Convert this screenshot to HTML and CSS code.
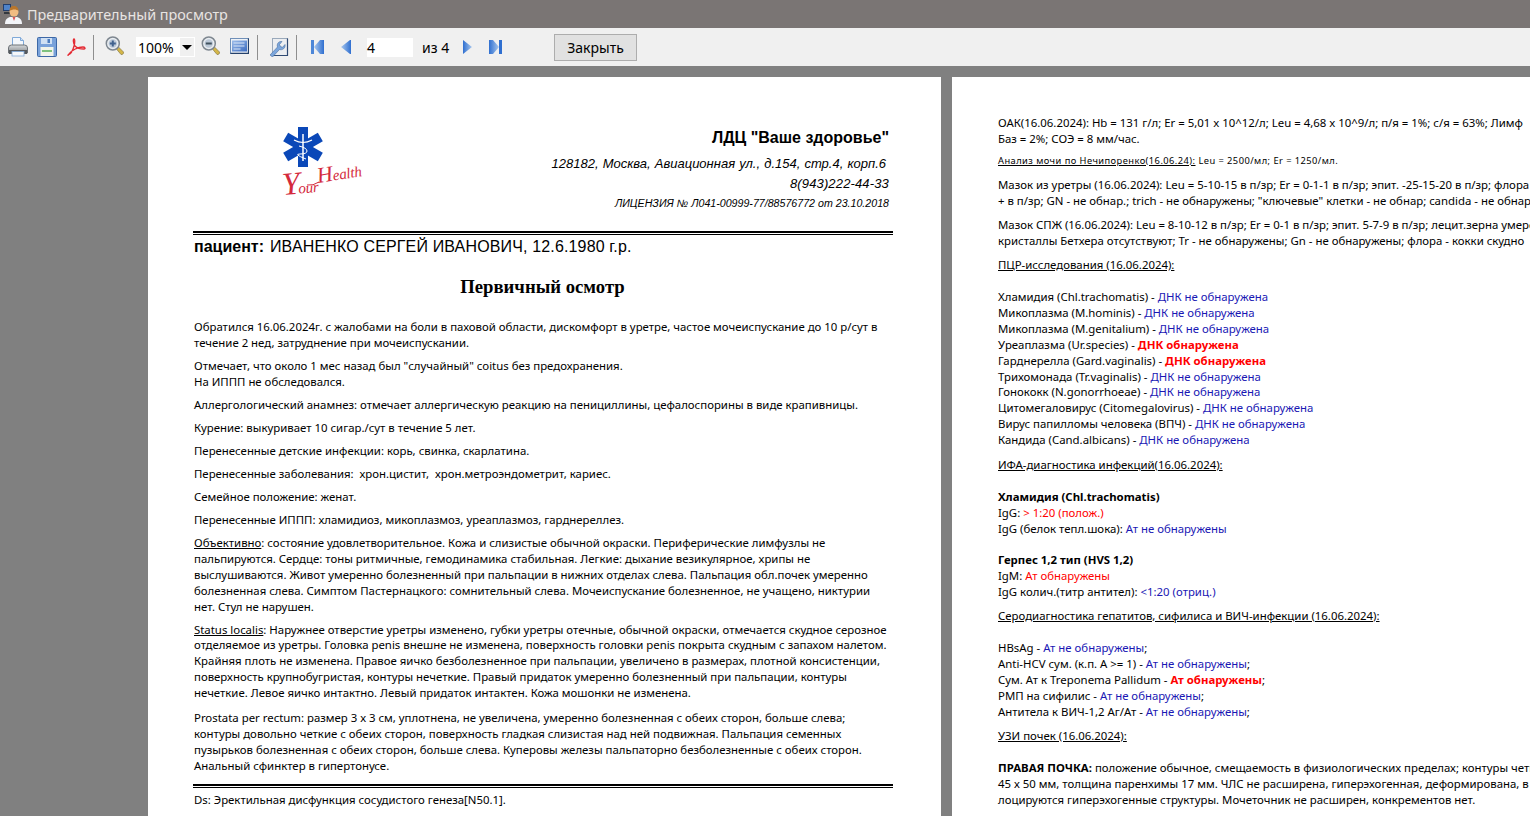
FILE: index.html
```html
<!DOCTYPE html>
<html lang="ru">
<head>
<meta charset="utf-8">
<title>Предварительный просмотр</title>
<link rel="stylesheet" href="styles.css">
</head>
<body>
<svg class="defs" width="0" height="0" aria-hidden="true">
  <defs>
    <linearGradient id="nav" x1="0" x2="1" y1="0" y2="0"><stop offset="0" stop-color="#a9c8ee"/><stop offset="1" stop-color="#2f6fd0"/></linearGradient>
    <linearGradient id="navr" x1="0" x2="1" y1="0" y2="0"><stop offset="0" stop-color="#2f6fd0"/><stop offset="1" stop-color="#a9c8ee"/></linearGradient>
    <linearGradient id="body" x1="0" x2="0" y1="0" y2="1"><stop offset="0" stop-color="#d5d8da"/><stop offset="1" stop-color="#85898c"/></linearGradient>
    <linearGradient id="panel" x1="0" x2="1" y1="0" y2="1"><stop offset="0" stop-color="#9dbdea"/><stop offset="1" stop-color="#3c6cc0"/></linearGradient>
    <symbol id="lens" viewBox="0 0 20 20">
      <path d="M11 12.500l2-2 5.500 5.500c.5 1.500-1 3-2.500 2.500z" fill="#d4b648" stroke="#7c6f3a" stroke-width=".6"/>
      <circle cx="7.800" cy="7.500" r="6.500" fill="#e9edf1" stroke="#7e8790" stroke-width="1.500"/>
      <circle cx="7.800" cy="7.500" r="4.200" fill="#bcc9d8"/>
    </symbol>
  </defs>
</svg>
<header class="titlebar">
  <svg class="app-icon" width="23" height="24" viewBox="0 0 23 24">
    <rect x="1.500" y="2.500" width="7" height="6" fill="#4f83c9" stroke="#223f6e"/>
    <rect x="2" y="10" width="6" height="2" fill="#33383f"/>
    <path d="M3 22c0-5 3-7 6-7h5c3 0 6 2 6 7z" fill="#f2f4f8"/>
    <path d="M10.500 15l1.500 4 1.500-4z" fill="#d55"/>
    <circle cx="12" cy="10" r="4.500" fill="#f2bd83"/>
    <path d="M7.500 9c0-4 2-5 4.500-5s4.500 1.500 4.500 5c-2-2-6-2-9 0z" fill="#b8762c"/>
  </svg>
  <span>Предварительный просмотр</span>
</header>
<nav class="toolbar">
  <svg class="tool t-print" width="20" height="20" viewBox="0 0 20 20">
    <path d="M4.500 .5h8l3 3v7h-11z" fill="#f3f7fc" stroke="#7fa9d8"/>
    <path d="M12.500 .5v3h3" fill="#cfe0f3" stroke="#7fa9d8"/>
    <path d="M.5 11q0-3 3-3h13q3 0 3 3v5h-19z" fill="url(#body)" stroke="#6d7277"/>
    <rect x="1" y="13" width="18" height="4" fill="#55595d"/>
    <rect x="4" y="14.500" width="12" height="4.500" fill="#f5f7f9" stroke="#7fa9d8" stroke-width=".8"/>
  </svg>
  <svg class="tool t-save" width="20" height="20" viewBox="0 0 20 20">
    <rect x=".5" y=".5" width="19" height="19" rx="1" fill="#79a2da" stroke="#3d68a6"/>
    <rect x="4" y="1" width="11" height="6" fill="#cfe0f3"/>
    <rect x="10.500" y="2" width="2.500" height="4" fill="#4d7dbe"/>
    <rect x="3.500" y="10" width="13" height="9" fill="#f1f4ea"/>
    <rect x="5" y="13" width="10" height="2" fill="#7fc27d"/>
  </svg>
  <svg class="tool t-pdf" width="19" height="20" viewBox="0 0 19 20">
    <path d="M1 18c3-1 5-5 6-9 1-3 1-7 0-7-1 0-1 4 1 7 2 2 5 3 9 3 2 0 1-2-1-2-5 0-11 3-14 7-1 1-1 2-1 1z" fill="none" stroke="#e42a33" stroke-width="1.300"/>
  </svg>
  <span class="sep"></span>
  <svg class="tool t-zin" width="20" height="20" viewBox="0 0 20 20">
    <use href="#lens"/>
    <path d="M4.800 7.500h6M7.800 4.500v6" stroke="#41638f" stroke-width="2"/>
  </svg>
  <div class="combo"><span>100%</span><span class="combo-btn"><svg width="10" height="5" viewBox="0 0 10 5"><path d="M0 0h10L5 5z" fill="#000"/></svg></span></div>
  <svg class="tool t-zout" width="20" height="20" viewBox="0 0 20 20">
    <use href="#lens"/>
    <path d="M4.800 7.500h6" stroke="#41525f" stroke-width="2"/>
  </svg>
  <svg class="tool t-page" width="19" height="16" viewBox="0 0 19 16">
    <rect x=".5" y=".5" width="18" height="15" fill="#eef2f7" stroke="#6f8fb8"/>
    <path d="M18.500 .5v15H.5" fill="none" stroke="#24406b" stroke-width="1.300"/>
    <rect x="2" y="2.500" width="15" height="11" fill="url(#panel)"/>
    <path d="M3.500 5h11M3.500 8h11M3.500 11h7" stroke="#dbe8f8" stroke-width="1.100"/>
  </svg>
  <span class="sep"></span>
  <svg class="tool t-set" width="20" height="20" viewBox="0 0 20 20">
    <rect x="3.500" y="1.500" width="15" height="17" fill="#eceef1" stroke="#9aa9bb"/>
    <path d="M18.500 1.500v17h-15" fill="none" stroke="#2f4a73" stroke-width="1.200"/>
    <path d="M1 18l7.500-8c-1-3 1-6 4.500-5.500l-2.500 3 1 2 2 .8 2.500-2.800c.8 3.500-2.500 6-5.500 5L3.500 20z" fill="#7ba6dd" stroke="#4a6f9e" stroke-width=".6"/>
  </svg>
  <span class="sep"></span>
  <svg class="tool t-first" width="14" height="16" viewBox="0 0 14 16">
    <rect x="0" y="1" width="3" height="14" fill="#4d87d8"/>
    <path d="M3 8l6-7h4v14H9z" fill="url(#nav)"/>
  </svg>
  <svg class="tool t-prev" width="11" height="16" viewBox="0 0 11 16">
    <path d="M0 8l9-7h1v14H9z" fill="url(#nav)"/>
  </svg>
  <span class="page-num">4</span>
  <span class="page-of">из 4</span>
  <svg class="tool t-next" width="11" height="14" viewBox="0 0 11 14">
    <path d="M1 0l9 7-9 7z" fill="url(#navr)"/>
  </svg>
  <svg class="tool t-last" width="13" height="16" viewBox="0 0 13 16">
    <path d="M10 8L4 1H0v14h4z" fill="url(#navr)"/>
    <rect x="10" y="1" width="3" height="14" fill="#2f6fd0"/>
  </svg>
  <button class="close-btn" type="button">Закрыть</button>
</nav>
<main class="viewer">
  <article class="page page-one">
    <div class="letterhead">
      <div class="logo">
        <svg width="82" height="76" viewBox="0 0 82 76">
          <g fill="#0b48b8">
            <rect x="15" y="0" width="10" height="40"/>
            <rect x="15" y="0" width="10" height="40" transform="rotate(60 20 20)"/>
            <rect x="15" y="0" width="10" height="40" transform="rotate(-60 20 20)"/>
          </g>
          <path d="M20 7v27" stroke="#fff" stroke-width="1.500"/>
          <path d="M11 13q9 5 18 0" fill="none" stroke="#fff" stroke-width="1.200"/>
          <path d="M16 19q8 2 8 5t-7 3 6 5" fill="none" stroke="#fff" stroke-width="1"/>
          <path class="logo-swash" d="M24 58q6 1 12-3"/>
          <text class="logo-health" x="35" y="56" transform="rotate(-9 35 56)"><tspan class="logo-cap">H</tspan>ealth</text>
          <text class="logo-your" x="0" y="68" transform="rotate(-5 0 68)"><tspan class="logo-cap-y">Y</tspan>our</text>
        </svg>
      </div>
      <div class="clinic">
        <div class="clinic-name">ЛДЦ "Ваше здоровье"</div>
        <div class="clinic-addr">128182, Москва, Авиационная ул., д.154, стр.4, корп.6</div>
        <div class="clinic-phone">8(943)222-44-33</div>
        <div class="clinic-lic">ЛИЦЕНЗИЯ № Л041-00999-77/88576772 от 23.10.2018</div>
      </div>
    </div>
    <div class="rule"></div>
    <div class="patient"><b>пациент:</b><span>ИВАНЕНКО СЕРГЕЙ ИВАНОВИЧ, 12.6.1980 г.р.</span></div>
    <h1 class="doc-title">Первичный осмотр</h1>
    <div class="doc">
      <p>Обратился 16.06.2024г. с жалобами на боли в паховой области, дискомфорт в уретре, частое мочеиспускание до 10 р/сут в<br>течение 2 нед, затруднение при мочеиспускании.</p>
      <p>Отмечает, что около 1 мес назад был "случайный" coitus без предохранения.<br>На ИППП не обследовался.</p>
      <p>Аллергологический анамнез: отмечает аллергическую реакцию на пенициллины, цефалоспорины в виде крапивницы.</p>
      <p>Курение: выкуривает 10 сигар./сут в течение 5 лет.</p>
      <p>Перенесенные детские инфекции: корь, свинка, скарлатина.</p>
      <p>Перенесенные заболевания:&nbsp; хрон.цистит,&nbsp; хрон.метроэндометрит, кариес.</p>
      <p>Семейное положение: женат.</p>
      <p>Перенесенные ИППП: хламидиоз, микоплазмоз, уреаплазмоз, гарднереллез.</p>
      <p><u>Объективно</u>: состояние удовлетворительное. Кожа и слизистые обычной окраски. Периферические лимфузлы не<br>пальпируются. Сердце: тоны ритмичные, гемодинамика стабильная. Легкие: дыхание везикулярное, хрипы не<br>выслушиваются. Живот умеренно болезненный при пальпации в нижних отделах слева. Пальпация обл.почек умеренно<br>болезненная слева. Симптом Пастернацкого: сомнительный слева. Мочеиспускание болезненное, не учащено, никтурии<br>нет. Стул не нарушен.</p>
      <p class="wider-gap"><u>Status localis</u>: Наружнее отверстие уретры изменено, губки уретры отечные, обычной окраски, отмечается скудное серозное<br>отделяемое из уретры. Головка penis внешне не изменена, поверхность головки penis покрыта скудным с запахом налетом.<br>Крайняя плоть не изменена. Правое яичко безболезненное при пальпации, увеличено в размерах, плотной консистенции,<br>поверхность крупнобугристая, контуры нечеткие. Правый придаток умеренно болезненный при пальпации, контуры<br>нечеткие. Левое яичко интактно. Левый придаток интактен. Кожа мошонки не изменена.</p>
      <p>Prostata per rectum: размер 3 х 3 см, уплотнена, не увеличена, умеренно болезненная с обеих сторон, больше слева;<br>контуры довольно четкие с обеих сторон, поверхность гладкая слизистая над ней подвижная. Пальпация семенных<br>пузырьков болезненная с обеих сторон, больше слева. Куперовы железы пальпаторно безболезненные с обеих сторон.<br>Анальный сфинктер в гипертонусе.</p>
    </div>
    <div class="rule rule-low"></div>
    <div class="doc doc-ds"><p>Ds: Эректильная дисфункция сосудистого генеза[N50.1].</p></div>
  </article>
  <article class="page page-two">
    <div class="doc">
      <p>ОАК(16.06.2024): Hb = 131 г/л; Er = 5,01 x 10^12/л; Leu = 4,68 x 10^9/л; п/я = 1%; с/я = 63%; Лимф<br>Баз = 2%; СОЭ = 8 мм/час.</p>
      <p class="small"><u>Анализ мочи по Нечипоренко(16.06.24):</u> Leu = 2500/мл; Er = 1250/мл.</p>
      <p>Мазок из уретры (16.06.2024): Leu = 5-10-15 в п/зр; Er = 0-1-1 в п/зр; эпит. -25-15-20 в п/зр; флора<br>+ в п/зр; GN - не обнар.; trich - не обнаружены; "ключевые" клетки - не обнар; candida - не обнаружены</p>
      <p>Мазок СПЖ (16.06.2024): Leu = 8-10-12 в п/зр; Er = 0-1 в п/зр; эпит. 5-7-9 в п/зр; лецит.зерна умеренно<br>кристаллы Бетхера отсутствуют; Tr - не обнаружены; Gn - не обнаружены; флора - кокки скудно</p>
      <p class="gap-after"><u>ПЦР-исследования (16.06.2024):</u></p>
      <p class="wide">Хламидия (Chl.trachomatis) - <span class="neg">ДНК не обнаружена</span><br>
      Микоплазма (M.hominis) - <span class="neg">ДНК не обнаружена</span><br>
      Микоплазма (M.genitalium) - <span class="neg">ДНК не обнаружена</span><br>
      Уреаплазма (Ur.species) - <b class="pos">ДНК обнаружена</b><br>
      Гарднерелла (Gard.vaginalis) - <b class="pos">ДНК обнаружена</b><br>
      Трихомонада (Tr.vaginalis) - <span class="neg">ДНК не обнаружена</span><br>
      Гонококк (N.gonorrhoeae) - <span class="neg">ДНК не обнаружена</span><br>
      Цитомегаловирус (Citomegalovirus) - <span class="neg">ДНК не обнаружена</span><br>
      Вирус папилломы человека (ВПЧ) - <span class="neg">ДНК не обнаружена</span><br>
      Кандида (Cand.albicans) - <span class="neg">ДНК не обнаружена</span></p>
      <p class="gap-after"><u>ИФА-диагностика инфекций(16.06.2024):</u></p>
      <p class="gap-tight"><b>Хламидия (Chl.trachomatis)</b><br>IgG: <span class="pos">&gt; 1:20 (полож.)</span><br>IgG (белок тепл.шока): <span class="neg">Ат не обнаружены</span></p>
      <p><b>Герпес 1,2 тип (HVS 1,2)</b><br>IgM: <span class="pos">Ат обнаружены</span><br>IgG колич.(титр антител): <span class="neg">&lt;1:20 (отриц.)</span></p>
      <p class="gap-after"><u>Серодиагностика гепатитов, сифилиса и ВИЧ-инфекции (16.06.2024):</u></p>
      <p>HBsAg - <span class="neg">Ат не обнаружены</span>;<br>
      Anti-HCV сум. (к.п. А &gt;= 1) - <span class="neg">Ат не обнаружены</span>;<br>
      Сум. Ат к Treponema Pallidum - <b class="pos">Ат обнаружены</b>;<br>
      РМП на сифилис - <span class="neg">Ат не обнаружены</span>;<br>
      Антитела к ВИЧ-1,2 Аг/Ат - <span class="neg">Ат не обнаружены</span>;</p>
      <p class="gap-after"><u>УЗИ почек (16.06.2024):</u></p>
      <p><b>ПРАВАЯ ПОЧКА:</b> положение обычное, смещаемость в физиологических пределах; контуры четкие<br>45 х 50 мм, толщина паренхимы 17 мм. ЧЛС не расширена, гиперэхогенная, деформирована, в ней<br>лоцируются гиперэхогенные структуры. Мочеточник не расширен, конкрементов нет.</p>
    </div>
  </article>
</main>
</body>
</html>
```
FILE: styles.css
```css
* { box-sizing: border-box; }
html, body { margin: 0; height: 100%; overflow: hidden; }
body {
  display: flex;
  flex-direction: column;
  width: 1530px;
  height: 816px;
  font-family: "Noto Sans", sans-serif;
  background: #808080;
}
.defs { position: absolute; }
.titlebar {
  flex: none;
  height: 28px;
  display: flex;
  align-items: center;
  gap: 2px;
  background: #7a7574;
  color: #e8e4e2;
  font-size: 14.4px;
  padding-left: 2px;
}
.toolbar {
  flex: none;
  height: 38px;
  display: flex;
  align-items: center;
  background: #f0f0f0;
  font-size: 14px;
  color: #000;
}
.tool { flex: none; display: block; }
.t-print { margin-left: 8px; }
.t-save { margin-left: 9px; }
.t-pdf { margin-left: 10px; }
.sep { flex: none; width: 1px; height: 25px; background: #8e8e8e; }
.t-pdf + .sep { margin-left: 7px; }
.t-zin { margin-left: 11px; margin-top: -3px; }
.combo {
  flex: none;
  width: 59px;
  height: 20px;
  margin-left: 11px;
  display: flex;
  justify-content: space-between;
  background: #fff;
  padding-left: 1px;
  border: 1px solid #fff;
  line-height: 19px;
}
.combo-btn {
  width: 14px;
  display: flex;
  align-items: center;
  justify-content: center;
  background: #f0f0f0;
}
.t-zout { margin-left: 6px; margin-top: -3px; }
.t-page { margin-left: 9px; margin-top: -3px; }
.t-page + .sep { margin-left: 8px; }
.t-set { margin-left: 11px; }
.t-set + .sep { margin-left: 7px; }
.t-first { margin-left: 14px; }
.t-prev { margin-left: 16px; }
.page-num {
  flex: none;
  width: 46px;
  height: 19px;
  margin-left: 15px;
  background: #fff;
  line-height: 19px;
}
.page-of { flex: none; width: 40px; margin-left: 9px; }
.t-next { margin-left: 0; }
.t-last { margin-left: 16px; }
.close-btn {
  flex: none;
  width: 83px;
  height: 27px;
  margin-left: 52px;
  padding: 0;
  background: #e1e1e1;
  border: 1px solid #adadad;
  font: inherit;
  color: #000;
}
.viewer {
  flex: 1;
  min-height: 0;
  display: flex;
  gap: 11px;
  padding: 11px 0 0 148px;
  overflow: hidden;
  background: #808080;
}
.page {
  flex: none;
  width: 793px;
  height: 900px;
  background: #fff;
  color: #000;
}
.page-one { padding: 0 48px 0 45px; }
.page-two { padding: 38px 0 0 46px; }
.letterhead { display: flex; height: 154px; }
.logo { flex: none; width: 170px; padding: 50px 0 0 90px; }
.logo svg { display: block; overflow: visible; }
.logo-health { font: italic 15px "Liberation Serif", serif; fill: #d42a3c; letter-spacing: -.2px; }
.logo-your { font: italic 15px "Liberation Serif", serif; fill: #d42a3c; letter-spacing: -.2px; }
.logo-cap { font-size: 22px; }
.logo-cap-y { font-size: 32px; letter-spacing: -2px; }
.logo-swash { fill: none; stroke: #d42a3c; stroke-width: 1; }
.clinic {
  flex: 1;
  padding: 51px 4px 0 0;
  text-align: right;
  font-family: "Liberation Sans", sans-serif;
  white-space: nowrap;
}
.clinic-name { font-size: 16px; font-weight: 700; line-height: 20px; }
.clinic-addr { font-size: 13px; font-style: italic; line-height: 20px; margin-top: 6px; word-spacing: .5px; padding-right: 3px; }
.clinic-phone { font-size: 13px; font-style: italic; line-height: 19px; letter-spacing: .15px; }
.clinic-lic { font-size: 10.65px; font-style: italic; line-height: 18px; margin-top: 1px; }
.rule { height: 4px; border-top: 2px solid #000; border-bottom: 1px solid #000; }
.patient {
  display: flex;
  gap: 6px;
  margin-top: 2px;
  padding-left: 1px;
  font-family: "Liberation Sans", sans-serif;
  font-size: 16px;
  line-height: 19px;
  white-space: nowrap;
}
.patient span { letter-spacing: .15px; }
.doc-title {
  margin: 19px 0 0;
  font: 700 18.7px/24px "Liberation Serif", serif;
  text-align: center;
  padding-right: 1px;
}
.doc { font-size: 11.4px; line-height: 15.8px; white-space: nowrap; }
.page-one .doc { padding-left: 1px; }
.page-one .doc:not(.doc-ds) { margin-top: 20px; }
.doc p { margin: 0 0 7.3px; }
.doc p.wider-gap { margin-bottom: 9.5px; }
.rule-low { margin-top: 11px; }
.doc-ds { margin-top: 3.500px; }
.page-two .doc { line-height: 15.9px; }
.page-two .doc p { margin-bottom: 8.1px; }
.page-two .doc p.wide { margin-bottom: 8.5px; }
.page-two .doc p.gap-after { margin-bottom: 16.4px; }
.page-two .doc p.gap-tight { margin-bottom: 15.4px; }
.page-two .doc p.small { font-size: 9.3px; letter-spacing: .45px; margin-top: -2px; }
.neg { color: #1a18b4; }
.pos { color: #ff0000; }
```
